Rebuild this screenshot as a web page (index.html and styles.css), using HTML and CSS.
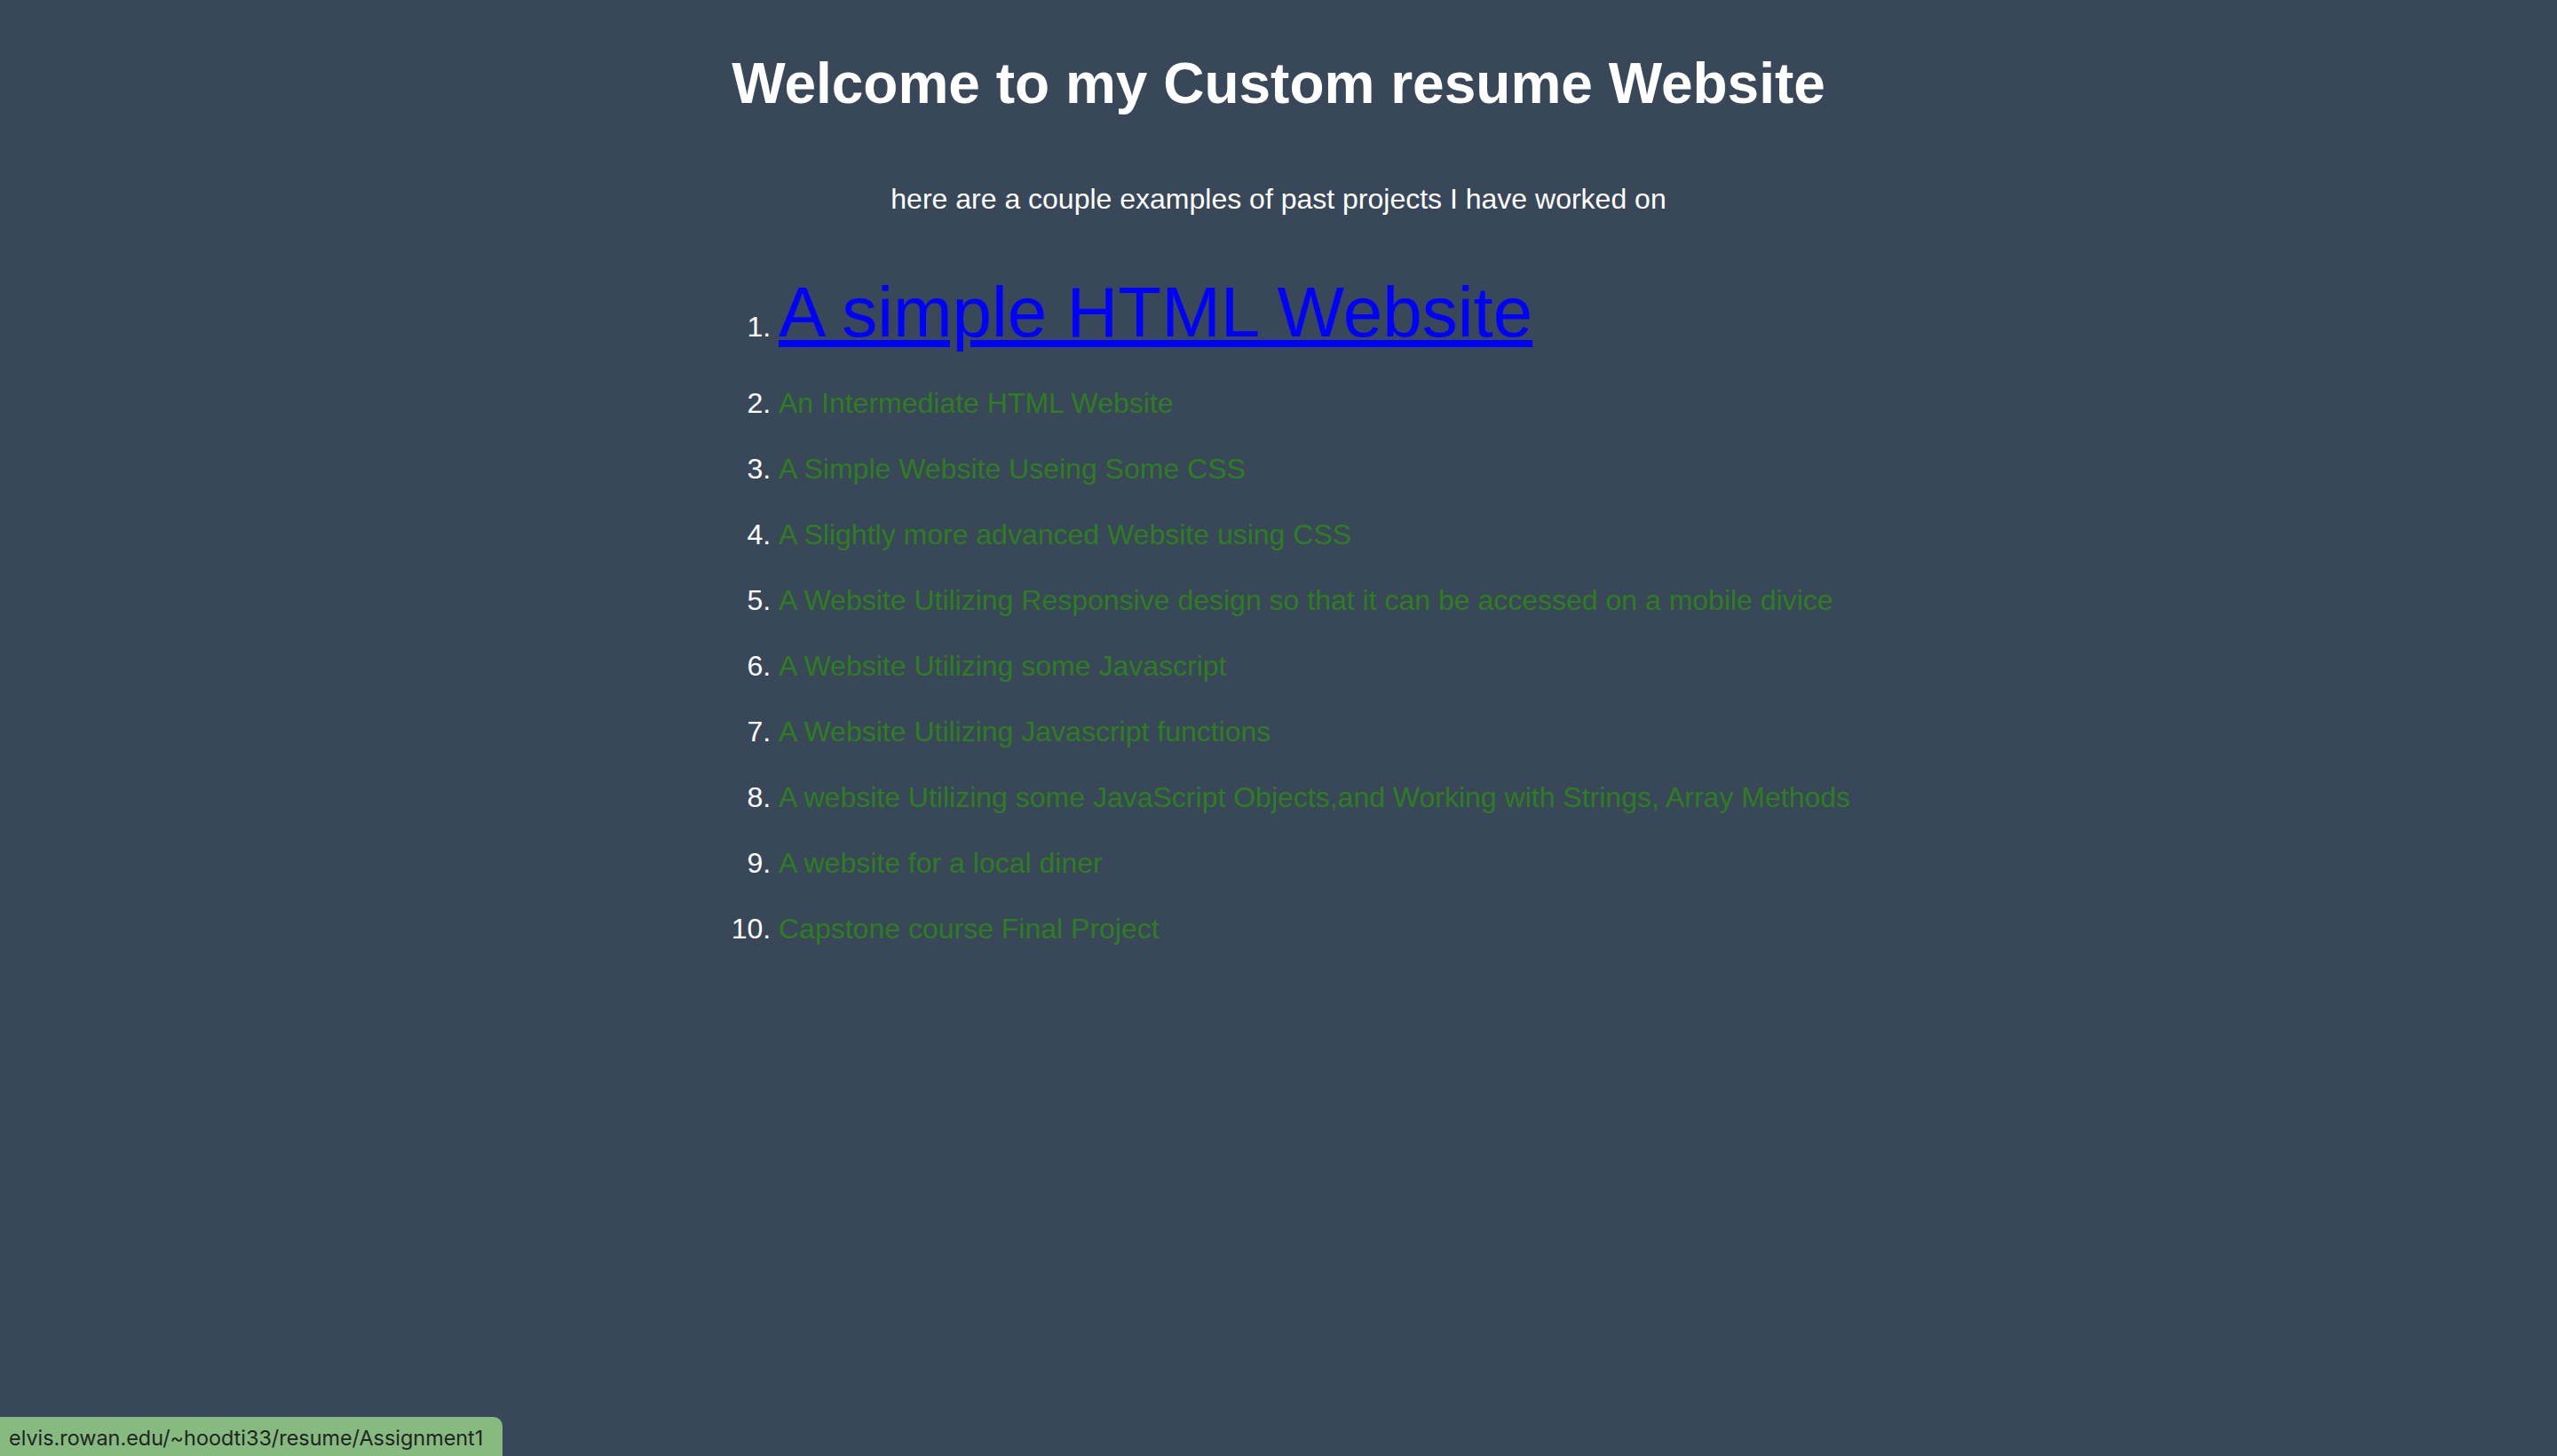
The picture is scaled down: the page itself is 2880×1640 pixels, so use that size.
FILE: index.html
```html
<!DOCTYPE html>
<html lang="en">
<head>
<meta charset="utf-8">
<title>Custom Resume Website</title>
<link rel="stylesheet" href="styles.css">
</head>
<body>
  <h1 class="title">Welcome to my Custom resume Website</h1>
  <p class="intro">here are a couple examples of past projects I have worked on</p>
  <ol class="projects">
    <li class="project project-active"><a class="project-link" href="#">A simple HTML Website</a></li>
    <li class="project"><a class="project-link" href="#">An Intermediate HTML Website</a></li>
    <li class="project"><a class="project-link" href="#">A Simple Website Useing Some CSS</a></li>
    <li class="project"><a class="project-link" href="#">A Slightly more advanced Website using CSS</a></li>
    <li class="project"><a class="project-link" href="#">A Website Utilizing Responsive design so that it can be accessed on a mobile divice</a></li>
    <li class="project"><a class="project-link" href="#">A Website Utilizing some Javascript</a></li>
    <li class="project"><a class="project-link" href="#">A Website Utilizing Javascript functions</a></li>
    <li class="project"><a class="project-link" href="#">A website Utilizing some JavaScript Objects,and Working with Strings, Array Methods</a></li>
    <li class="project"><a class="project-link" href="#">A website for a local diner</a></li>
    <li class="project"><a class="project-link" href="#">Capstone course Final Project</a></li>
  </ol>
  <div class="status-bubble">elvis.rowan.edu/~hoodti33/resume/Assignment1</div>
</body>
</html>
```
FILE: styles.css
```css
html, body {
  margin: 0;
  padding: 0;
}

body {
  background-color: #384859;
  color: #ffffff;
  font-family: "Liberation Sans", Arial, sans-serif;
  min-height: 1640px;
}

.title {
  margin: 57px 0 0;
  font-size: 64px;
  line-height: 74px;
  font-weight: bold;
  text-align: center;
}

.intro {
  margin: 75px 0 0;
  font-size: 32px;
  line-height: 37px;
  text-align: center;
}

.projects {
  margin: 63px 0 0 797px;
  padding: 0 0 0 80px;
  font-size: 32px;
  line-height: 37px;
}

.project + .project {
  margin-top: 37px;
}

.project-active {
  padding-bottom: 2px;
}

.project-link {
  color: #2f7d20;
  text-decoration: none;
}

.project-active .project-link {
  color: #0000ff;
  font-size: 80px;
  line-height: 91px;
  text-decoration: underline;
}

.status-bubble {
  position: fixed;
  left: 0;
  bottom: 0;
  width: 566px;
  height: 44px;
  box-sizing: border-box;
  padding: 3px 0 0 10px;
  background-color: #86ba80;
  border-top-right-radius: 10px;
  color: #1f261f;
  font-family: Inter, "Noto Sans", sans-serif;
  font-size: 23.4px;
  line-height: 41px;
  white-space: nowrap;
}
```
